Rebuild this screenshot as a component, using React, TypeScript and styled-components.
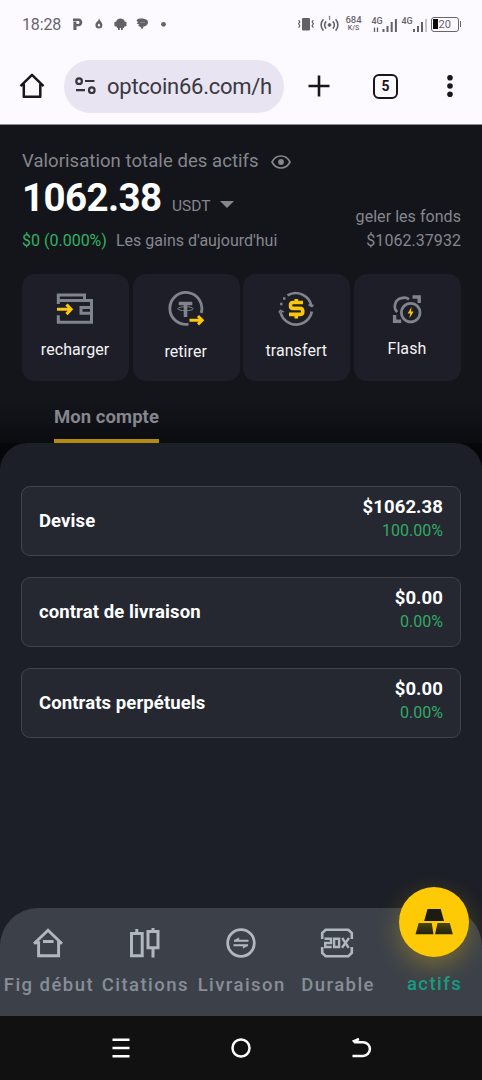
import React from 'react';
import styled, { createGlobalStyle } from 'styled-components';

const GlobalStyle = createGlobalStyle`
  * { box-sizing: border-box; }
  body { margin: 0; background: #14151b; font-family: Roboto, "Liberation Sans", sans-serif; }
  svg { display: block; flex: none; }
`;

const Screen = styled.div`
  width: 482px;
  height: 1080px;
  display: flex;
  flex-direction: column;
  overflow: hidden;
  background: #14151b;
`;

const BrowserTop = styled.header`
  height: 125px;
  flex: none;
  background: #fcfaff;
  border-bottom: 1px solid #8b8a91;
`;

const StatusBar = styled.div`
  height: 48px;
  padding: 0 21px 0 22px;
  display: flex;
  align-items: center;
  justify-content: space-between;
  color: #66656b;
`;

const Clock = styled.span`
  font-size: 16px;
  line-height: 20px;
  letter-spacing: -0.15px;
  width: 50px;
  margin-top: 1px;
`;

const StatusGroup = styled.div`
  display: flex;
  align-items: center;
`;

const Toolbar = styled.div`
  height: 76px;
  display: flex;
  align-items: center;
  padding: 0 19px;
`;

const AddressPill = styled.div`
  width: 220px;
  height: 53px;
  margin: 0 24px 0 19px;
  padding-left: 11px;
  border-radius: 27px;
  background: #e8e4f2;
  display: flex;
  align-items: center;
  gap: 11px;
  color: #3a3942;
  font-size: 22px;
  letter-spacing: -0.25px;
  white-space: nowrap;
`;

const TabCount = styled.div`
  width: 25px;
  height: 25px;
  margin: 0 40px 0 43px;
  border: 2.5px solid #17171b;
  border-radius: 6px;
  display: flex;
  align-items: center;
  justify-content: center;
  font-size: 14px;
  font-weight: 700;
  color: #17171b;
`;

const Main = styled.main`
  flex: 1;
  display: flex;
  flex-direction: column;
  min-height: 0;
`;

const Summary = styled.section`
  padding: 24px 21px 0 22px;
  height: 149px;
  color: #85868e;
`;

const TitleLine = styled.div`
  display: flex;
  align-items: center;
  gap: 12px;
  height: 24px;
  font-size: 18.5px;
  letter-spacing: 0.06px;
  white-space: nowrap;
`;

const BalanceLine = styled.div`
  display: flex;
  justify-content: space-between;
  height: 50px;
`;

const Balance = styled.div`
  display: flex;
  align-items: baseline;
  font-size: 15.5px;
  line-height: 50px;
`;

const Amount = styled.strong`
  color: #fff;
  font-size: 38.5px;
  font-weight: 700;
  letter-spacing: -0.6px;
  width: 150px;
`;

const Caret = styled.i`
  margin-left: 10px;
  border: 7px solid transparent;
  border-top-color: #85868e;
  border-bottom: 0;
  align-self: center;
  margin-top: 12px;
`;

const Frozen = styled.span`
  align-self: flex-end;
  font-size: 16px;
  line-height: 20px;
  letter-spacing: 0.05px;
  margin-bottom: -4px;
`;

const GainsLine = styled.div`
  display: flex;
  height: 34px;
  align-items: center;
  font-size: 16px;
  white-space: nowrap;
`;

const Gain = styled.span`
  color: #2fb364;
  width: 94px;
`;

const FrozenValue = styled.span`
  margin-left: auto;
  letter-spacing: 0.05px;
`;

const Actions = styled.div`
  padding: 0 21px 0 22px;
  display: grid;
  grid-template-columns: repeat(4, 1fr);
  gap: 3.5px;
  height: 107px;
`;

const ActionCard = styled.button<{ $top: number; $gap: number }>`
  border: 0;
  border-radius: 13px;
  background: #1d1e27;
  color: #f3f3f5;
  font: 400 16px/20px Roboto, sans-serif;
  letter-spacing: 0.08px;
  padding: ${(p) => p.$top}px 1px 0 0;
  display: flex;
  flex-direction: column;
  align-items: center;
  gap: ${(p) => p.$gap}px;
`;

const Tabs = styled.div`
  height: 62px;
  padding: 24px 0 0 54px;
  background: linear-gradient(#14151b 35%, #0b0c10);
`;

const Tab = styled.span`
  display: inline-block;
  height: 38px;
  border-bottom: 4px solid #b38c0e;
  color: #85868e;
  font-size: 18.5px;
  line-height: 24px;
  font-weight: 700;
  letter-spacing: 0.06px;
`;

const PanelBackdrop = styled.div`
  flex: 1;
  background: #06070a;
  display: flex;
`;

const Panel = styled.section`
  flex: 1;
  display: flex;
  flex-direction: column;
  justify-content: space-between;
  border-radius: 27px 27px 0 0;
  background: #1c1f27;
`;

const Accounts = styled.div`
  padding: 43px 21px 0;
  display: flex;
  flex-direction: column;
  gap: 21px;
`;

const AccountRow = styled.div`
  height: 70px;
  padding: 0 17px;
  border: 1px solid #40434a;
  border-radius: 9px;
  background: #252830;
  display: flex;
  align-items: center;
  justify-content: space-between;
  color: #fff;
  font-size: 18.5px;
  font-weight: 700;
`;

const AccountName = styled.span`
  letter-spacing: 0.1px;
`;

const AccountValue = styled.div`
  display: flex;
  flex-direction: column;
  align-items: flex-end;
  line-height: 24px;
  margin-top: -4px;
  letter-spacing: 0.1px;
`;

const Percent = styled.span`
  color: #32a866;
  font-size: 16px;
  font-weight: 400;
  letter-spacing: 0;
`;

const BottomBar = styled.nav`
  height: 108px;
  border-radius: 38px 38px 0 0;
  background: #3c4149;
  display: grid;
  grid-template-columns: repeat(5, 1fr);
`;

const NavItem = styled.a<{ $active?: boolean }>`
  position: relative;
  display: flex;
  flex-direction: column;
  align-items: center;
  padding-top: 19px;
  gap: 15px;
  color: ${(p) => (p.$active ? '#159c82' : '#888e97')};
  font-size: 18.5px;
  line-height: 22px;
  font-weight: 500;
  letter-spacing: 1.45px;
  white-space: nowrap;
`;

const NavLabel = styled.span`
  margin-right: -1.45px;
`;

const GoldSpacer = styled.div`
  height: 31px;
`;

const GoldButton = styled.div`
  position: absolute;
  top: -21px;
  width: 70px;
  height: 70px;
  border-radius: 50%;
  background: #fdca05;
  box-shadow: 0 9px 24px rgba(253, 202, 5, 0.3);
  display: flex;
  align-items: center;
  justify-content: center;
`;

const SystemBar = styled.footer`
  height: 64px;
  flex: none;
  background: #111112;
  display: flex;
  justify-content: center;
  align-items: center;
  gap: 96px;
`;

const GREY = '#80848d';
const GOLD = '#fcc70a';
const NAV = '#b1b7c1';

const NotificationIcons = () => (
  <svg width="96" height="16" viewBox="72 16 96 16" fill="#626167">
    <path d="M73 18.5h5.5c5 0 5 7.8 0 7.8h-2V30h-3.1v-8.6h3v2.5h2c1.5 0 1.5-3 0-3H73z" />
    <path d="M99 18.5c1 2.5 3.4 3.7 3.4 6.5a3.5 3.5 0 0 1-7 0c0-2.8 3-3.5 3.6-6.5zm-.2 5c-1.5 1.3-1.3 3 .2 3s1.5-2 0-3z" fillRule="evenodd" />
    <path d="M116.3 21.5c.4-2 2-3 4.2-3s3.8 1 4.2 3l1.8.6v3.8l-1.6.7h-.8V28h-1.3v2h-1.8v-2h-1.2v2H118v-2h-1.2v-1.4h-.8l-1.6-.7v-3.8z" />
    <path d="M136.4 20.2c3-2.5 7.3-1.6 9.2-1 1.9.8 2.9 2 2.2 4.2-.7 1.8-2.5 3-4.2 3l-1.5 3.2-1.5-2.6-2.5-1.3 1.2-1.3-2.7-1 1.4-1.2z" />
    <path d="M140 22.5h5" stroke="#8d8c92" strokeWidth=".7" />
    <circle cx="163.5" cy="24.3" r="2.4" />
  </svg>
);

const SignalText = styled.span<{ $size: number }>`
  font-size: ${(p) => p.$size}px;
  line-height: 8px;
  font-weight: 500;
`;

const SpeedBox = styled.div`
  width: 20px;
  margin: -1px 8px 0 5px;
  display: flex;
  flex-direction: column;
  align-items: center;
`;

const SignalBox = styled.div<{ $width: number }>`
  width: ${(p) => p.$width}px;
  height: 18px;
  display: flex;
  align-items: flex-end;
  position: relative;
`;

const SignalTag = styled(SignalText)`
  position: absolute;
  top: 2px;
  left: 0;
`;

const Battery = styled.div`
  width: 28px;
  height: 15px;
  border: 1.5px solid #67666d;
  border-radius: 3px;
  display: flex;
  align-items: center;
  gap: 1px;
  padding-left: 1px;
  font-size: 11px;
  line-height: 11px;
`;

const BatteryLevel = styled.span`
  width: 5px;
  height: 10px;
  background: #09090b;
`;

const BatteryTip = styled.span`
  width: 1.5px;
  height: 6px;
  margin-left: 1px;
  background: #67666d;
`;

const VibrateHotspot = () => (
  <svg width="42" height="18" viewBox="297 15 42 18" fill="none" stroke="#626167">
    <rect x="302" y="18" width="8" height="12.5" rx="1" fill="#626167" stroke="none" />
    <path d="M298.6 20.2l1.2 1.7-1.2 1.8 1.2 2-1.2 2M313.3 20.2l-1.2 1.7 1.2 1.8-1.2 2 1.2 2" strokeWidth="1.2" />
    <circle cx="329.5" cy="25" r="1.4" fill="#626167" />
    <path d="M326.2 21.3a5 5 0 0 0 0 7.3M332.8 21.3a5 5 0 0 1 0 7.3M323.4 19.2a8.3 8.3 0 0 0 0 11.4M335.6 19.2a8.3 8.3 0 0 1 0 11.4" strokeWidth="1.6" />
    <path d="M328.7 16.8l1-.6v4" strokeWidth=".9" />
  </svg>
);

const HomeIcon = () => (
  <svg width="26" height="26" viewBox="0 0 26 26" fill="none" stroke="#17171b" strokeWidth="2.5">
    <path d="M1.5 13.2L13 1.9l11.5 11.3M4.8 11v12.7h16.5V11" strokeLinejoin="round" />
  </svg>
);

const TuneIcon = () => (
  <svg width="21" height="18" viewBox="0 0 21 18" fill="none" stroke="#36353d" strokeWidth="2.2">
    <circle cx="4.1" cy="4.2" r="2.8" /><path d="M10 4h9.5M1 13.2h9" /><circle cx="16.8" cy="13.2" r="2.8" />
  </svg>
);

const PlusIcon = () => (
  <svg width="22" height="22" viewBox="0 0 22 22" stroke="#17171b" strokeWidth="2.6"><path d="M11 .5v21M.5 11h21" /></svg>
);

const DotsIcon = () => (
  <svg width="24" height="24" viewBox="0 0 24 24" fill="#17171b"><circle cx="12" cy="3.8" r="2.8" /><circle cx="12" cy="12" r="2.8" /><circle cx="12" cy="20.2" r="2.8" /></svg>
);

const EyeIcon = () => (
  <svg width="20" height="16" viewBox="0 0 20 16" fill="none" stroke="#85868e" strokeWidth="1.7">
    <path d="M1 9c4.1-8 13.9-8 18 0-4.1 8-13.9 8-18 0z" /><circle cx="10" cy="9" r="2.9" fill="#85868e" stroke="none" />
  </svg>
);

const WalletIcon = () => (
  <svg width="38" height="32" viewBox="0 0 38 32" fill="none" stroke={GREY} strokeWidth="3">
    <path d="M2.3 11V1.9h26.2V7M1.5 7.5h34v21.7H2.3v-7M36 14.5h-11v5.7h11" />
    <path d="M1 16.3h13M10.5 11.5l4.6 4.8-4.6 4.8" stroke={GOLD} />
  </svg>
);

const WithdrawIcon = () => (
  <svg width="38" height="36" viewBox="0 0 38 36" fill="none" stroke={GREY}>
    <path d="M21.5 33.2A16 16 0 1 1 34.2 22" strokeWidth="2.8" />
    <path d="M11.7 12.5h13.6M18.5 12.5V26" strokeWidth="3.6" />
    <ellipse cx="18.5" cy="17.7" rx="7.7" ry="2" strokeWidth="1" />
    <path d="M22.5 29.2h12M31 25l4.2 4.2-4.2 4.2" stroke={GOLD} strokeWidth="2.9" />
  </svg>
);

const TransferIcon = () => (
  <svg width="36" height="36" viewBox="0 0 36 36" fill="none" stroke={GREY}>
    <path d="M9.5 4.4a16 16 0 0 1 24 11.1M2.5 21.3a16 16 0 0 0 31.3-.8" strokeWidth="2.7" />
    <path d="M30.5 13.5l3.5 2 1.5-1.7M.8 21.5l1.6-2 3.3 1.5" strokeWidth="1.5" />
    <path d="M5 7.5h2.4M2.1 13h2.4" strokeWidth="2.4" />
    <path d="M25 11.5H14.8q-2.3 0-2.3 2.9t2.3 3H22q2.8 0 2.8 3t-2.8 3H11M18.3 8v3.3M18.3 23.4v4" stroke={GOLD} strokeWidth="3.6" />
  </svg>
);

const FlashIcon = () => (
  <svg width="30" height="30" viewBox="0 0 30 30" fill="none" stroke={GREY} strokeWidth="2.7">
    <path d="M5.2 18A8.2 8.2 0 0 1 9.5 4.2q4-1.6 7.5 1.2" />
    <circle cx="18.7" cy="18.6" r="9.3" />
    <path d="M20.5 3h6.7v6M2.6 21v6.3h6.6" strokeWidth="3.4" />
    <path d="M19.7 12.8l-4 6.7h2.6l-1 5 4.3-7H19z" fill={GOLD} stroke="none" />
  </svg>
);

const StartIcon = () => (
  <svg width="32" height="32" viewBox="0 0 32 32" fill="none" stroke={NAV} strokeWidth="2.9">
    <path d="M2 16.8L16 3.2l14 13.6M2 15.7h4.6v13h20v-13h3.3M11 14.5h10.5" />
  </svg>
);

const CandlesIcon = () => (
  <svg width="32" height="32" viewBox="0 0 32 32" fill="none" stroke={NAV} strokeWidth="3">
    <path d="M2.5 6.5h10.7v22.2H2.5zM7.8 2v4M19 4.5h10v16.3H19zM24 1v3M24 21v9.5" />
  </svg>
);

const DeliveryIcon = () => (
  <svg width="32" height="32" viewBox="0 0 32 32" fill="none" stroke={NAV} strokeWidth="2.8">
    <circle cx="16" cy="16" r="13.3" />
    <path d="M9 13.7h14.5M8.5 18.3H23" strokeWidth="2" />
    <path d="M9 13.7l4.8-2.9v2.9zM23 18.3l-4.8 2.9v-2.9z" fill={NAV} strokeWidth=".6" />
  </svg>
);

const LeverageIcon = () => (
  <svg width="34" height="32" viewBox="0 0 34 32" fill="none" stroke={NAV} strokeWidth="2.6">
    <path d="M2.2 12V6.1l3.5-3.3h22.6l3.5 3.3V12M2.2 20v5.9l3.5 3.3h22.6l3.5-3.3V20" />
    <path d="M4.5 11.8h6.5v4.2H5.2v4h6.5M14.1 11.8h5v8.2h-5zM22.2 11l6.5 9.8M29 11l-7 9.8" strokeWidth="2.4" />
  </svg>
);

const GoldBarsIcon = () => (
  <svg width="38" height="28" viewBox="0 0 38 28">
    <defs><linearGradient id="bars" x1="0" y1="0" x2="0" y2="1"><stop stopColor="#4b4512" /><stop offset="1" stopColor="#222110" /></linearGradient></defs>
    <path d="M12.5 1h13.2l3.3 12H9.2z" fill="#1c1b12" />
    <path d="M3.7 15h13l1.8 11.3H.5zM22.5 15h12.3l3 11.3H20z" fill="url(#bars)" />
  </svg>
);

const actions = [
  { label: 'recharger', icon: <WalletIcon />, top: 19, gap: 15 },
  { label: 'retirer', icon: <WithdrawIcon />, top: 17, gap: 15 },
  { label: 'transfert', icon: <TransferIcon />, top: 17, gap: 14 },
  { label: 'Flash', icon: <FlashIcon />, top: 20, gap: 15 },
];

const accounts = [
  { name: 'Devise', value: '$1062.38', percent: '100.00%' },
  { name: 'contrat de livraison', value: '$0.00', percent: '0.00%' },
  { name: 'Contrats perpétuels', value: '$0.00', percent: '0.00%' },
];

const navItems = [
  { label: 'Fig début', icon: <StartIcon /> },
  { label: 'Citations', icon: <CandlesIcon /> },
  { label: 'Livraison', icon: <DeliveryIcon /> },
  { label: 'Durable', icon: <LeverageIcon /> },
];

export default function App() {
  return (
    <Screen>
      <GlobalStyle />
      <BrowserTop>
        <StatusBar>
          <StatusGroup><Clock>18:28</Clock><NotificationIcons /></StatusGroup>
          <StatusGroup>
            <VibrateHotspot />
            <SpeedBox><SignalText $size={9.5}>684</SignalText><SignalText $size={7}>K/S</SignalText></SpeedBox>
            <SignalBox $width={30}>
              <SignalTag $size={9}>4G</SignalTag>
              <svg width="26" height="16" viewBox="0 0 26 16" stroke="#626167" strokeWidth="2"><path d="M11.5 12v3M15.5 9v6M19.7 5v10M23.9 2v13" /><path d="M2.5 10.5V15M5.5 10.5V15" strokeWidth="1.3" /></svg>
            </SignalBox>
            <SignalBox $width={29}>
              <SignalTag $size={9}>4G</SignalTag>
              <svg width="26" height="16" viewBox="0 0 26 16" stroke="#626167" strokeWidth="2"><path d="M12 12v3M16 9v6M20 5v10" /><path d="M24 2v13" stroke="#c4c2c9" /></svg>
            </SignalBox>
            <Battery><BatteryLevel />20</Battery><BatteryTip />
          </StatusGroup>
        </StatusBar>
        <Toolbar>
          <HomeIcon />
          <AddressPill><TuneIcon />optcoin66.com/h</AddressPill>
          <PlusIcon />
          <TabCount>5</TabCount>
          <DotsIcon />
        </Toolbar>
      </BrowserTop>
      <Main>
        <Summary>
          <TitleLine>Valorisation totale des actifs<EyeIcon /></TitleLine>
          <BalanceLine>
            <Balance><Amount>1062.38</Amount>USDT<Caret /></Balance>
            <Frozen>geler les fonds</Frozen>
          </BalanceLine>
          <GainsLine>
            <Gain>$0 (0.000%)</Gain>Les gains d'aujourd'hui
            <FrozenValue>$1062.37932</FrozenValue>
          </GainsLine>
        </Summary>
        <Actions>
          {actions.map((a) => (
            <ActionCard key={a.label} $top={a.top} $gap={a.gap}>{a.icon}{a.label}</ActionCard>
          ))}
        </Actions>
        <Tabs><Tab>Mon compte</Tab></Tabs>
        <PanelBackdrop>
          <Panel>
            <Accounts>
              {accounts.map((a) => (
                <AccountRow key={a.name}>
                  <AccountName>{a.name}</AccountName>
                  <AccountValue>{a.value}<Percent>{a.percent}</Percent></AccountValue>
                </AccountRow>
              ))}
            </Accounts>
            <BottomBar>
              {navItems.map((n) => (
                <NavItem key={n.label}>{n.icon}<NavLabel>{n.label}</NavLabel></NavItem>
              ))}
              <NavItem $active>
                <GoldButton><GoldBarsIcon /></GoldButton>
                <GoldSpacer />
                <NavLabel>actifs</NavLabel>
              </NavItem>
            </BottomBar>
          </Panel>
        </PanelBackdrop>
      </Main>
      <SystemBar>
        <svg width="24" height="24" viewBox="0 0 24 24" stroke="#fff" strokeWidth="2.5"><path d="M3.5 3.8h17M3.5 12h17M3.5 20.2h17" /></svg>
        <svg width="24" height="24" viewBox="0 0 24 24" fill="none" stroke="#fff" strokeWidth="2.5"><circle cx="12" cy="12" r="8.5" /></svg>
        <svg width="24" height="24" viewBox="0 0 24 24" fill="none" stroke="#fff" strokeWidth="2.5"><path d="M10 3L5 5.2l1 1h8a6.9 6.9 0 0 1 0 13.8H3.5" /></svg>
      </SystemBar>
    </Screen>
  );
}
